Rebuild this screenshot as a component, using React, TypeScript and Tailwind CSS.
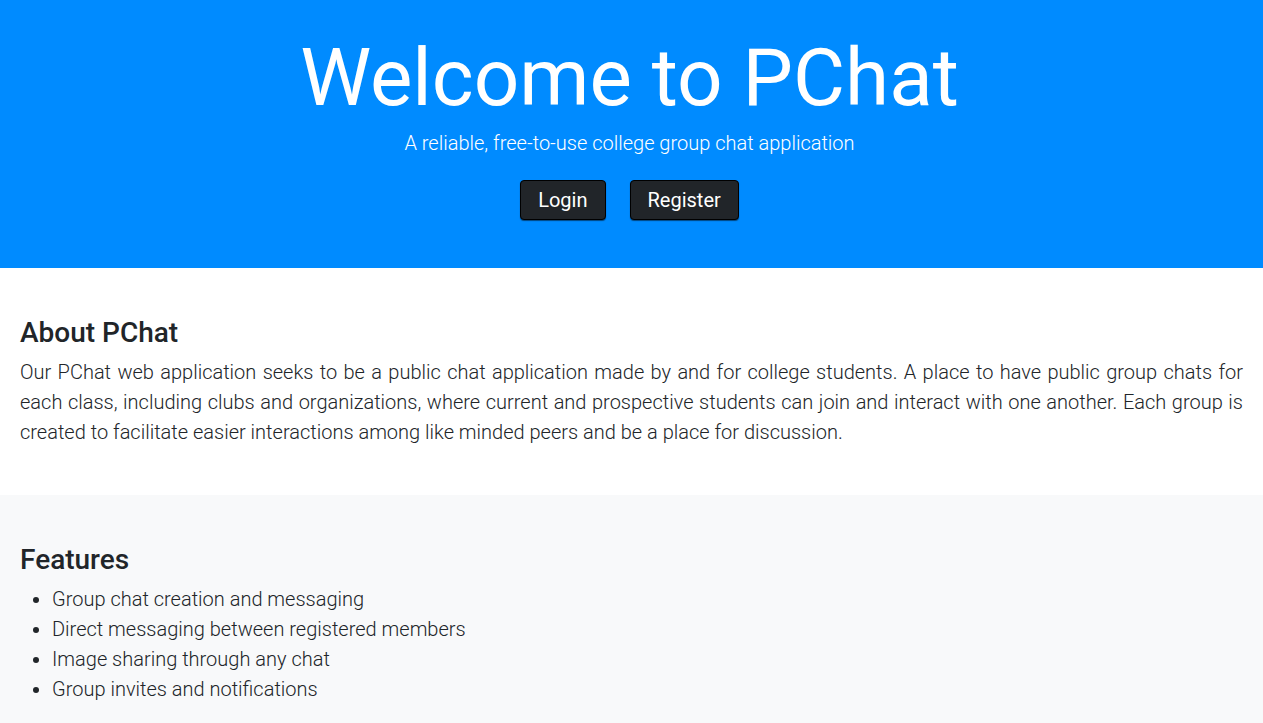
export default function App() {
  const features = [
    "Group chat creation and messaging",
    "Direct messaging between registered members",
    "Image sharing through any chat",
    "Group invites and notifications",
  ];

  return (
    <div className="min-h-screen bg-[#f8f9fa] font-['Roboto',sans-serif] text-[#212529]">
      {/* hero */}
      <header className="bg-[#008bff] pt-[30px] pr-1 pb-12 text-center text-white">
        <h1 className="text-[80px] leading-[1.2] font-normal">Welcome to PChat</h1>
        <p className="mt-[2px] text-[20px] leading-[30px] font-light">
          A reliable, free-to-use college group chat application
        </p>
        <div className="mt-[22px] flex justify-center gap-6">
          <button className="h-10 rounded border border-black bg-[#212529] px-[17px] text-[20px] text-white shadow-[0_1px_1px_rgba(0,0,0,0.5)]">
            Login
          </button>
          <button className="h-10 rounded border border-black bg-[#212529] px-[17px] text-[20px] text-white shadow-[0_1px_1px_rgba(0,0,0,0.5)]">
            Register
          </button>
        </div>
      </header>

      {/* about */}
      <section className="bg-white px-5 pt-12 pb-12">
        <h2 className="mb-[7px] text-[28px] leading-[1.2] font-medium">About PChat</h2>
        <p className="text-justify text-[20px] leading-[30px] font-light">
          Our PChat web application seeks to be a public chat application made by and for college students. A place to have
          public group chats for each class, including clubs and organizations, where current and prospective students can
          join and interact with one another. Each group is created to facilitate easier interactions among like minded
          peers and be a place for discussion.
        </p>
      </section>

      {/* features */}
      <section className="px-5 pt-12 pb-12">
        <h2 className="mb-2 text-[28px] leading-[1.2] font-medium">Features</h2>
        <ul className="list-disc pl-8 text-[20px] leading-[30px] font-light">
          {features.map((f) => (
            <li key={f}>{f}</li>
          ))}
        </ul>
      </section>
    </div>
  );
}
